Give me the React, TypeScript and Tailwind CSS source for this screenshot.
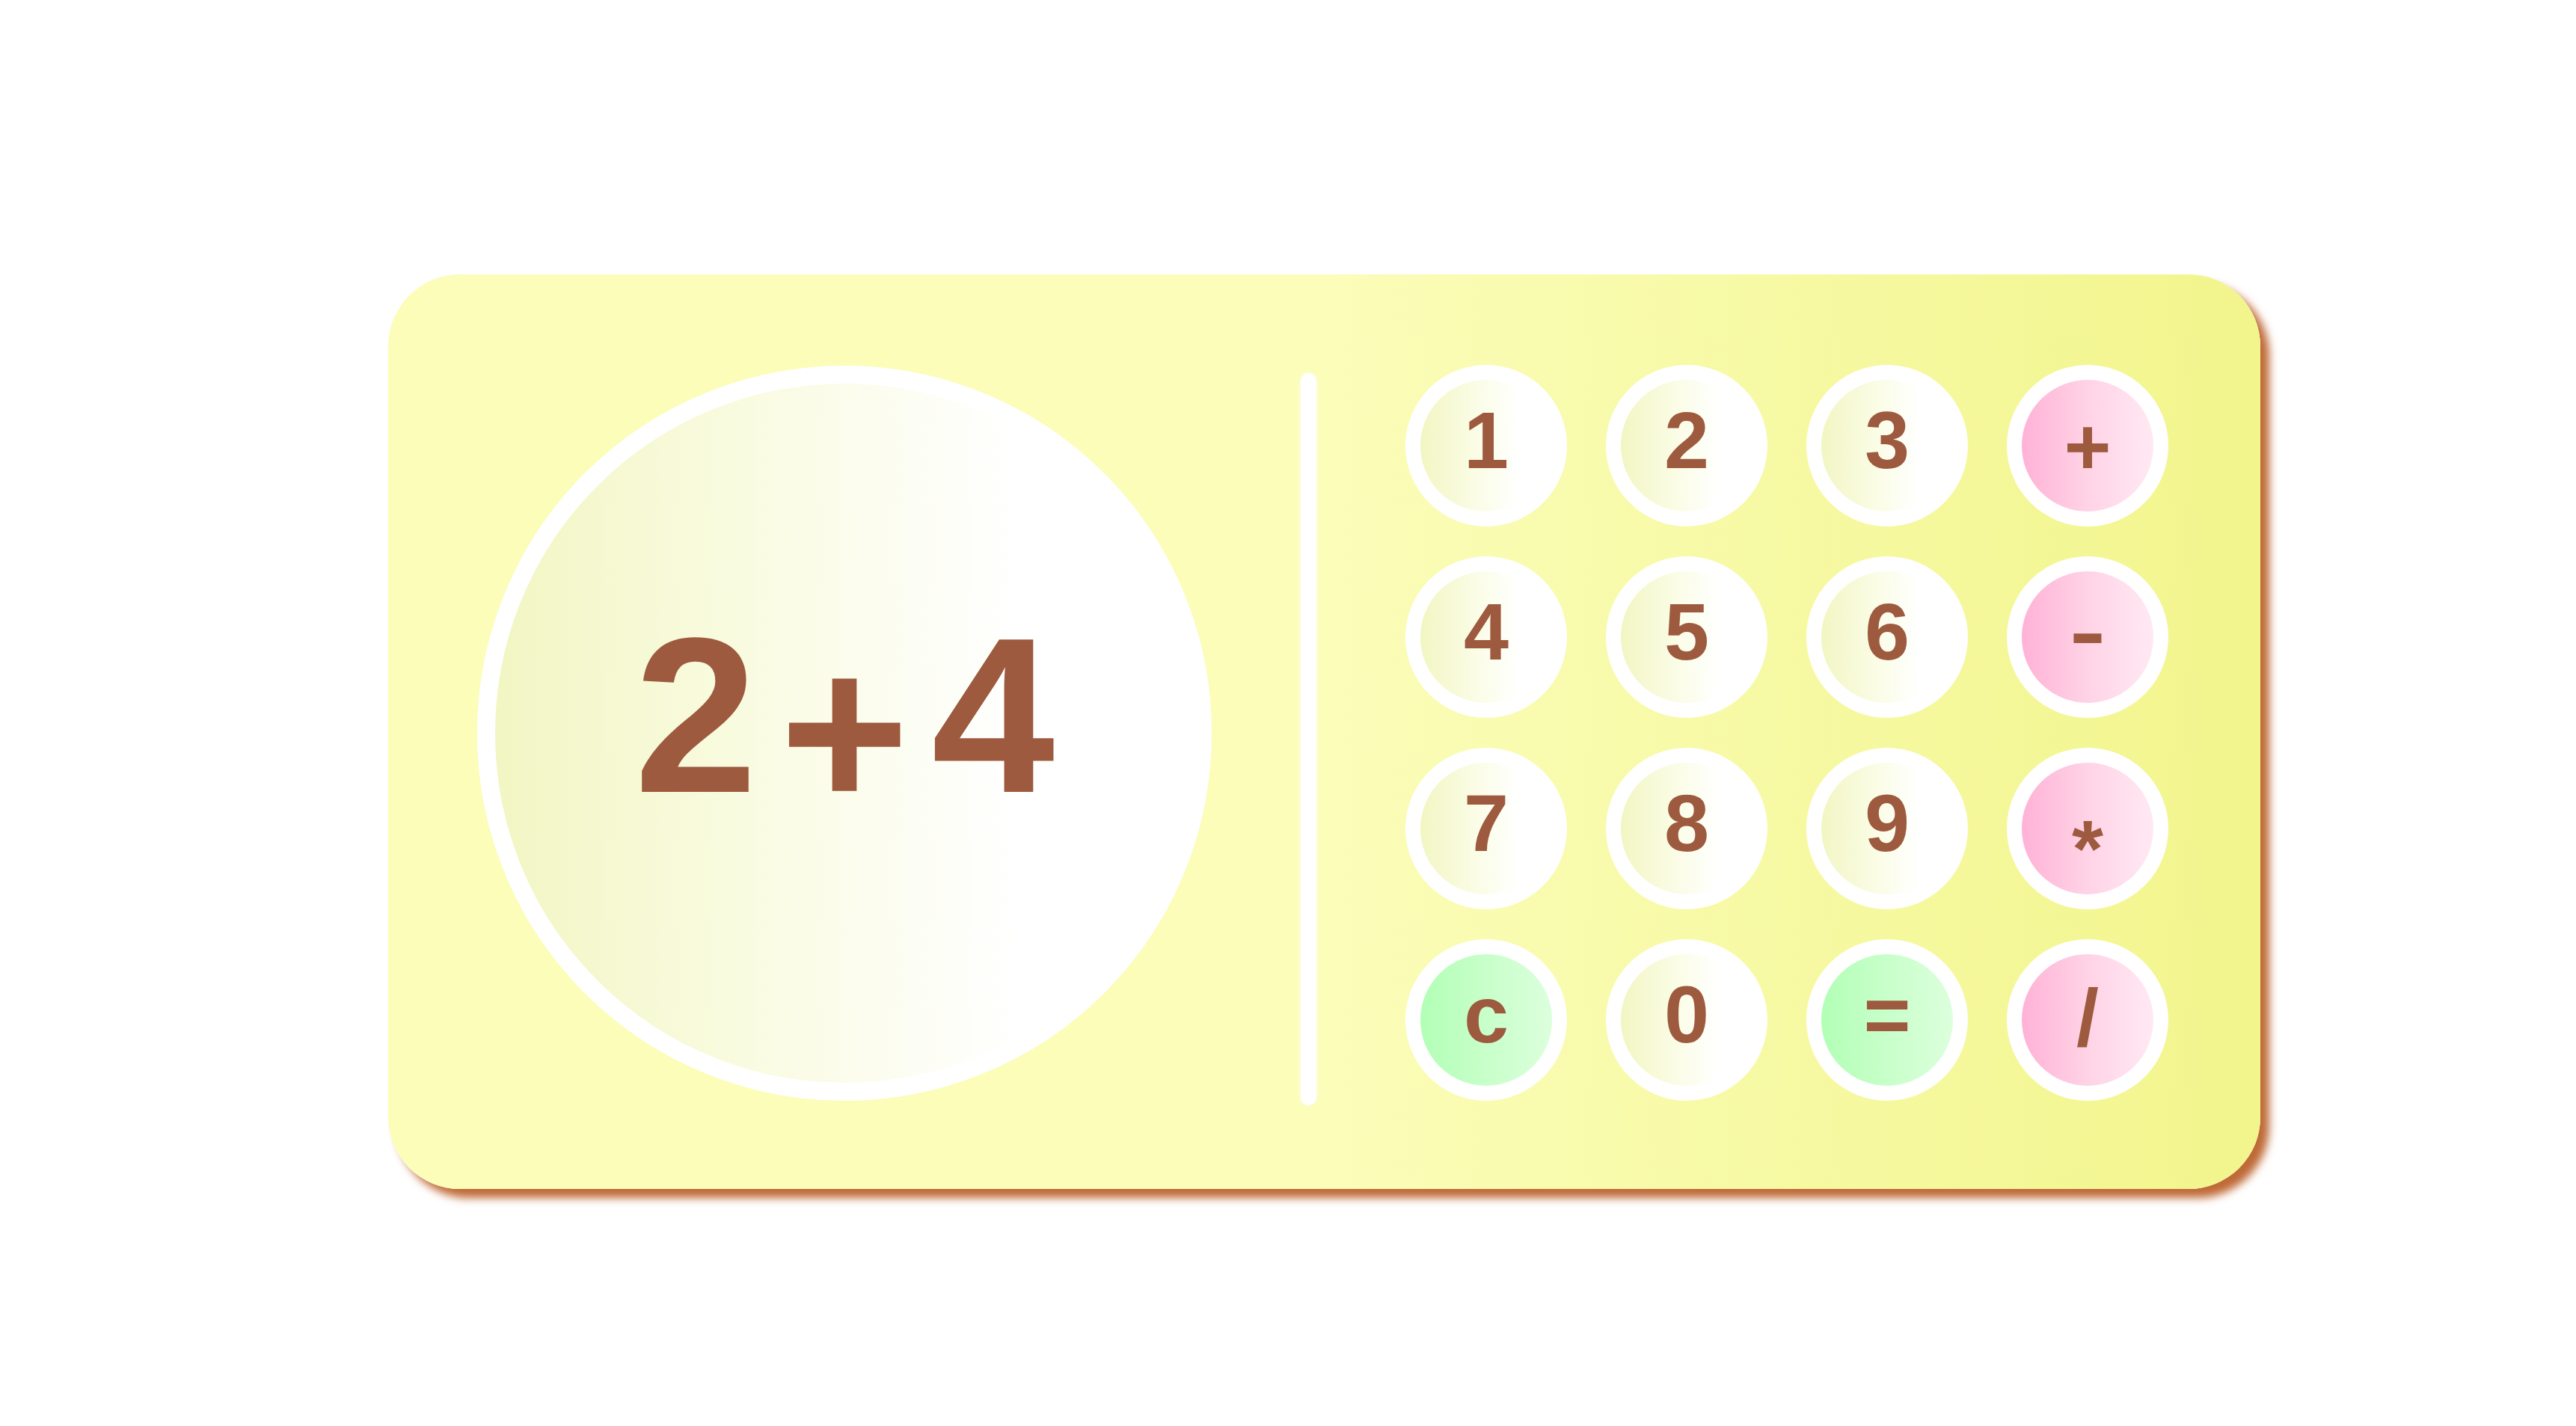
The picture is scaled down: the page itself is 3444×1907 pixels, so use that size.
import { useState } from 'react';

type Kind = 'num' | 'op' | 'action';

interface Key {
  label: string;
  kind: Kind;
  // small glyph nudges so operators sit where the design has them
  nudge?: string;
}

const keys: Key[] = [
  { label: '1', kind: 'num' },
  { label: '2', kind: 'num' },
  { label: '3', kind: 'num' },
  { label: '+', kind: 'op', nudge: 'translate-y-[8px]' },
  { label: '4', kind: 'num' },
  { label: '5', kind: 'num' },
  { label: '6', kind: 'num' },
  { label: '-', kind: 'op', nudge: 'scale-x-[1.35]' },
  { label: '7', kind: 'num' },
  { label: '8', kind: 'num' },
  { label: '9', kind: 'num' },
  { label: '*', kind: 'op', nudge: 'translate-y-[34px]' },
  { label: 'c', kind: 'action' },
  { label: '0', kind: 'num' },
  { label: '=', kind: 'action' },
  { label: '/', kind: 'op', nudge: 'translate-y-[4px]' },
];

const faceClass: Record<Kind, string> = {
  num: 'bg-[linear-gradient(to_right,#f2f6c3,#fbfde8_45%,#ffffff_75%)]',
  op: 'bg-[linear-gradient(to_right,#ffb2d6,#ffd3e6_50%,#ffe9f3)]',
  action: 'bg-[linear-gradient(to_right,#b2ffb6,#c8ffca_50%,#dcffdc)]',
};

const App = () => {
  const [expr, setExpr] = useState('2+4');

  const press = (k: Key) => {
    if (k.label === 'c') {
      setExpr('');
      return;
    }
    if (k.label === '=') {
      try {
        // only digits and + - * / ever get in here
        const result = Function(`"use strict"; return (${expr || 0})`)();
        setExpr(String(result));
      } catch {
        setExpr('Error');
      }
      return;
    }
    setExpr((prev) => (prev === 'Error' ? k.label : prev + k.label));
  };

  const renderExpr = (text: string) =>
    text.split('').map((ch, i) =>
      ch === '+' ? (
        <span key={i} className="inline-block translate-y-[22px]">
          {ch}
        </span>
      ) : (
        <span key={i}>{ch}</span>
      )
    );

  return (
    <div className="min-h-[1907px] w-full bg-white font-['Liberation_Sans',Arial,sans-serif] font-bold text-[#9d5a3e]">
      <div className="pl-[519px] pt-[367px]">
        {/* Calculator body */}
        <div className="flex w-[2503px] items-center gap-[119px] rounded-[96px] bg-[linear-gradient(to_right,#fbfdb9_50%,#f2f58c)] pb-[118px] pl-[119px] pr-[123px] pt-[121px] shadow-[12px_12px_12px_#bf6a37]">
          {/* Display */}
          <div className="flex h-[983px] w-[982px] shrink-0 items-center justify-center rounded-full border-[24px] border-white bg-[linear-gradient(to_right,#f2f6c3,#f9fbe0_35%,#ffffff_75%)] pb-[46px] pl-[30px]">
            <div className="whitespace-nowrap text-[296px] leading-none tracking-[30px]">
              {renderExpr(expr)}
            </div>
          </div>

          {/* Divider */}
          <div className="h-[979px] w-[21px] shrink-0 translate-y-[8px] rounded-full bg-white shadow-[0_0_6px_rgba(255,255,255,0.7)]" />

          {/* Keypad */}
          <div className="grid grid-cols-[repeat(4,216px)] gap-x-[52px] gap-y-[40px]">
            {keys.map((k) => (
              <button
                key={k.label}
                onClick={() => press(k)}
                className={`flex h-[216px] w-[216px] items-center justify-center rounded-full border-[20px] border-white pb-[14px] ${faceClass[k.kind]}`}
              >
                <span className={`inline-block text-[108px] leading-none ${k.nudge ?? ''}`}>
                  {k.label}
                </span>
              </button>
            ))}
          </div>
        </div>
      </div>
    </div>
  );
};

export default App;
